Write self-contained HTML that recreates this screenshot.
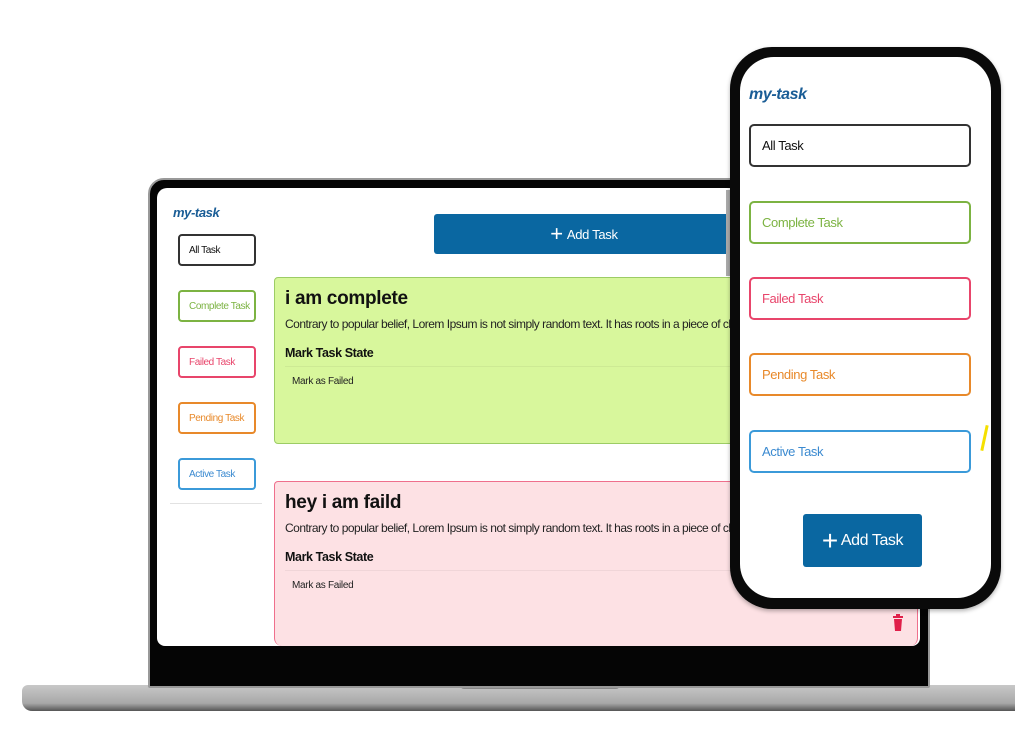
<!DOCTYPE html>
<html><head><meta charset="utf-8"><style>
*{margin:0;padding:0;box-sizing:border-box}
body{width:1015px;height:751px;background:#fff;position:relative;overflow:hidden;font-family:"Liberation Sans",sans-serif}
.a{position:absolute}
.btn{position:absolute;border:2px solid;border-radius:4px;background:#fff;font-size:10px;letter-spacing:-0.4px;padding-left:9px;display:flex;align-items:center;white-space:nowrap}
.pbtn{position:absolute;left:749px;width:222px;height:43px;border:2px solid;border-radius:5px;background:#fff;font-size:13px;letter-spacing:-0.4px;padding-left:11px;display:flex;align-items:center}
.card{position:absolute;left:274px;width:644px;border:1px solid;border-radius:4px;padding:10px 10px;overflow:hidden}
.card h2{font-size:19px;font-weight:bold;color:#111;letter-spacing:-0.3px}
.card p{font-size:12px;color:#222;margin-top:7px;white-space:nowrap;letter-spacing:-0.5px}
.card h4{font-size:12.5px;font-weight:bold;color:#111;margin-top:15px;letter-spacing:-0.4px}
.card .bar{height:1px;background:rgba(0,0,0,.05);margin-top:6px}
.card .m{font-size:10px;color:#222;margin:9px 0 0 7px;letter-spacing:-0.3px}
</style></head><body>
<div class="a" style="left:22px;top:685px;width:993px;height:26px;background:linear-gradient(#c8c8c8,#a8a8a8 70%,#555);border-radius:6px 0 0 10px"></div>
<div class="a" style="left:460px;top:685px;width:160px;height:4px;background:#888;border-radius:0 0 4px 4px"></div>
<div class="a" style="left:148px;top:178px;width:782px;height:510px;background:#050505;border-radius:16px 16px 2px 2px;border:2px solid #999"></div>
<div class="a" style="left:157px;top:188px;width:763px;height:458px;background:#fff;border-radius:10px 10px 8px 8px;overflow:hidden">
  <div class="a" style="left:16px;top:17px;font-size:13px;font-weight:bold;font-style:italic;color:#1a5d96;letter-spacing:-0.4px">my-task</div>
  <div class="btn" style="left:21px;top:46px;width:78px;height:32px;border-color:#333;color:#111">All Task</div>
  <div class="btn" style="left:21px;top:102px;width:78px;height:32px;border-color:#7cb342;color:#7cb342">Complete Task</div>
  <div class="btn" style="left:21px;top:158px;width:78px;height:32px;border-color:#e8456b;color:#e8456b">Failed Task</div>
  <div class="btn" style="left:21px;top:214px;width:78px;height:32px;border-color:#e8892a;color:#e8892a">Pending Task</div>
  <div class="btn" style="left:21px;top:270px;width:78px;height:32px;border-color:#3b9ad9;color:#3b8ad0">Active Task</div>
  <div class="a" style="left:13px;top:315px;width:92px;height:1px;background:#e2e2e2"></div>
  <div class="a" style="left:277px;top:26px;width:300px;height:40px;background:#0a67a1;border-radius:3px;color:#fff;font-size:13px;letter-spacing:-0.3px;display:flex;align-items:center;justify-content:center"><span style="font-size:22px;margin-right:4px;font-weight:300">+</span>Add Task</div>
  <div class="a" style="left:569px;top:2px;width:4px;height:86px;background:#aaa"></div>
</div>
<div class="card" style="top:277px;height:167px;background:#d8f79c;border-color:#9ccc65">
  <h2>i am complete</h2>
  <p>Contrary to popular belief, Lorem Ipsum is not simply random text. It has roots in a piece of classical Latin literature</p>
  <h4>Mark Task State</h4><div class="bar"></div>
  <div class="m">Mark as Failed</div>
</div>
<div class="card" style="top:481px;height:165px;background:#fde1e4;border-color:#ef6f8c;border-bottom:none;border-radius:4px 4px 8px 8px">
  <h2>hey i am faild</h2>
  <p>Contrary to popular belief, Lorem Ipsum is not simply random text. It has roots in a piece of classical Latin literature</p>
  <h4>Mark Task State</h4><div class="bar"></div>
  <div class="m">Mark as Failed</div>
</div>
<svg class="a" style="left:892px;top:614px" width="12" height="18" viewBox="0 0 12 18"><rect x="1" y="2" width="10" height="2" fill="#e0204a"/><rect x="4" y="0" width="4" height="2" fill="#e0204a"/><path d="M2 5h8l-1 12H3z" fill="#e0204a"/></svg>
<div class="a" style="left:730px;top:47px;width:271px;height:562px;background:#0a0a0a;border-radius:42px;box-shadow:0 2px 4px rgba(0,0,0,.3)"></div>
<div class="a" style="left:740px;top:57px;width:251px;height:541px;background:#fff;border-radius:34px"></div>
<div class="a" style="left:749px;top:86px;font-size:16px;font-weight:bold;font-style:italic;color:#1a5d96;letter-spacing:-0.4px">my-task</div>
<div class="pbtn" style="top:124px;border-color:#333;color:#111">All Task</div>
<div class="pbtn" style="top:201px;border-color:#7cb342;color:#7cb342">Complete Task</div>
<div class="pbtn" style="top:277px;border-color:#e8456b;color:#e8456b">Failed Task</div>
<div class="pbtn" style="top:353px;border-color:#e8892a;color:#e8892a">Pending Task</div>
<div class="pbtn" style="top:430px;border-color:#3b9ad9;color:#3b8ad0">Active Task</div>
<div class="a" style="left:803px;top:514px;width:119px;height:53px;background:#0a67a1;border-radius:3px;color:#fff;font-size:16px;letter-spacing:-0.4px;display:flex;align-items:center;justify-content:center"><span style="font-size:28px;margin-right:3px;font-weight:300">+</span>Add Task</div>
<div class="a" style="left:983px;top:425px;width:3px;height:26px;background:#f5e000;transform:rotate(12deg)"></div>
</body></html>
